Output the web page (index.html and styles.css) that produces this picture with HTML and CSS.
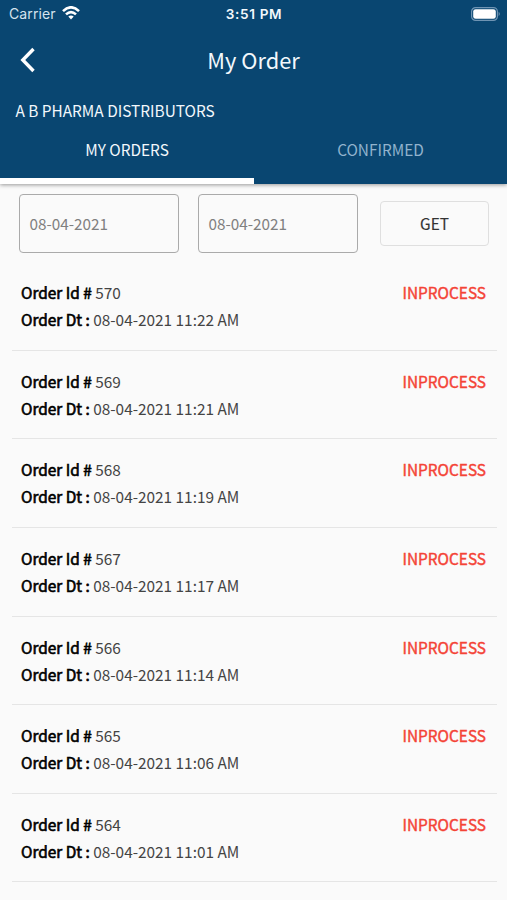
FILE: index.html
```
<!DOCTYPE html>
<html lang="en">
<head>
<meta charset="utf-8">
<title>My Order</title>
<link rel="stylesheet" href="styles.css">
</head>
<body>
<header class="header">
  <div class="status-bar">
    <div class="carrier">
      <span>Carrier</span>
      <svg class="wifi" width="18" height="14" viewBox="0 0 18 14" fill="none" stroke="#fff" stroke-width="2.6">
        <path d="M1 5.1Q9-2.5 17 5.1"/>
        <path d="M4 8.4Q9 3.7 14 8.4"/>
        <path d="M6.3 10.6Q9 8.3 11.7 10.6L9 13.5Z" fill="#fff" stroke="none"/>
      </svg>
    </div>
    <span class="time">3:51 PM</span>
    <svg class="battery" width="30" height="14" viewBox="0 0 30 14">
      <rect x=".6" y=".6" width="25.8" height="12.8" rx="4" fill="none" stroke="#6f94b3" stroke-width="1.2"/>
      <rect x="2.2" y="2.2" width="22.6" height="9.6" rx="2.4" fill="#fff"/>
      <path d="M27.6 4.8Q30 7 27.6 9.2Z" fill="#6f94b3"/>
    </svg>
  </div>
  <div class="title-bar">
    <svg class="back" width="17" height="26" viewBox="0 0 17 26" fill="none" stroke="#fff" stroke-width="3.4"><path d="M14.5 2L3.8 13L14.5 24"/></svg>
    <h1 class="title">My Order</h1>
  </div>
  <div class="company">A B PHARMA DISTRIBUTORS</div>
  <nav class="tabs">
    <div class="tab active">MY ORDERS</div>
    <div class="tab">CONFIRMED</div>
  </nav>
</header>
<main>
  <div class="filters">
    <div class="date">08-04-2021</div>
    <div class="date">08-04-2021</div>
    <div class="get">GET</div>
  </div>
  <div class="orders">
    <div class="order"><div class="info"><div><b>Order Id #</b> 570</div><div><b>Order Dt :</b> 08-04-2021 11:22 AM</div></div><div class="state">INPROCESS</div></div>
    <div class="order"><div class="info"><div><b>Order Id #</b> 569</div><div><b>Order Dt :</b> 08-04-2021 11:21 AM</div></div><div class="state">INPROCESS</div></div>
    <div class="order"><div class="info"><div><b>Order Id #</b> 568</div><div><b>Order Dt :</b> 08-04-2021 11:19 AM</div></div><div class="state">INPROCESS</div></div>
    <div class="order"><div class="info"><div><b>Order Id #</b> 567</div><div><b>Order Dt :</b> 08-04-2021 11:17 AM</div></div><div class="state">INPROCESS</div></div>
    <div class="order"><div class="info"><div><b>Order Id #</b> 566</div><div><b>Order Dt :</b> 08-04-2021 11:14 AM</div></div><div class="state">INPROCESS</div></div>
    <div class="order"><div class="info"><div><b>Order Id #</b> 565</div><div><b>Order Dt :</b> 08-04-2021 11:06 AM</div></div><div class="state">INPROCESS</div></div>
    <div class="order"><div class="info"><div><b>Order Id #</b> 564</div><div><b>Order Dt :</b> 08-04-2021 11:01 AM</div></div><div class="state">INPROCESS</div></div>
  </div>
</main>
</body>
</html>
```
FILE: styles.css
```
* { box-sizing: border-box; }
body {
  margin: 0;
  height: 900px;
  overflow: hidden;
  background: #fafafa;
  font: 15.38px/27px "Noto Sans CJK SC", "Noto Sans", sans-serif;
  color: #444;
}
.header {
  height: 184px;
  background: #094671;
  color: #f3f8fc;
  box-shadow: 0 1px 4px rgba(0, 0, 0, .4);
}
.status-bar {
  display: grid;
  grid-template-columns: 1fr auto 1fr;
  align-items: center;
  height: 28px;
  padding: 0 6px 0 9px;
  font: 14px/28px Inter, "Liberation Sans", sans-serif;
}
.carrier { display: flex; align-items: center; gap: 6px; color: #d5e3ee; letter-spacing: .1px; }
.wifi { margin-top: -2px; }
.time { font-weight: 600; font-size: 13.6px; letter-spacing: .65px; margin-left: -2px; }
.battery { justify-self: end; margin-top: -1px; }
.title-bar {
  display: grid;
  grid-template-columns: 40px 1fr 40px;
  align-items: center;
  height: 62px;
  padding: 0 19px;
}
.back { margin-top: 2px; }
.title { margin: 2px 0 0; font-size: 21.8px; font-weight: 400; line-height: 30px; text-align: center; }
.company { height: 39px; padding-left: 15.5px; line-height: 40px; }
.tabs { display: grid; grid-template-columns: 254px 1fr; height: 55px; line-height: 41px; text-align: center; }
.tab { color: #91b3cd; }
.active { color: #f3f8fc; border-bottom: 6px solid #fff; }
.filters {
  display: grid;
  grid-template-columns: 160px 160px 109px;
  align-items: center;
  column-gap: 19px;
  height: 78px;
  padding-left: 19px;
}
.filters > :last-child { margin-left: 3px; margin-right: -3px; }
.date { height: 59px; padding-left: 9.5px; border: 1px solid #aaa; border-radius: 4px; line-height: 57px; font-size: 15.3px; color: #808080; }
.get { height: 45px; border: 1px solid #dfdfdf; border-radius: 4px; line-height: 43px; text-align: center; color: #333; -webkit-text-stroke: .15px; }
.orders { padding: 0 10px 0 12px; }
.order {
  display: flex;
  justify-content: space-between;
  height: 88.65px;
  padding: 17px 11px 0 9px;
  border-bottom: 1px solid #e5e5e5;
}
b { font-weight: 400; color: #000; -webkit-text-stroke: .6px; }
.state { color: #f44336; -webkit-text-stroke: .4px; }
```
